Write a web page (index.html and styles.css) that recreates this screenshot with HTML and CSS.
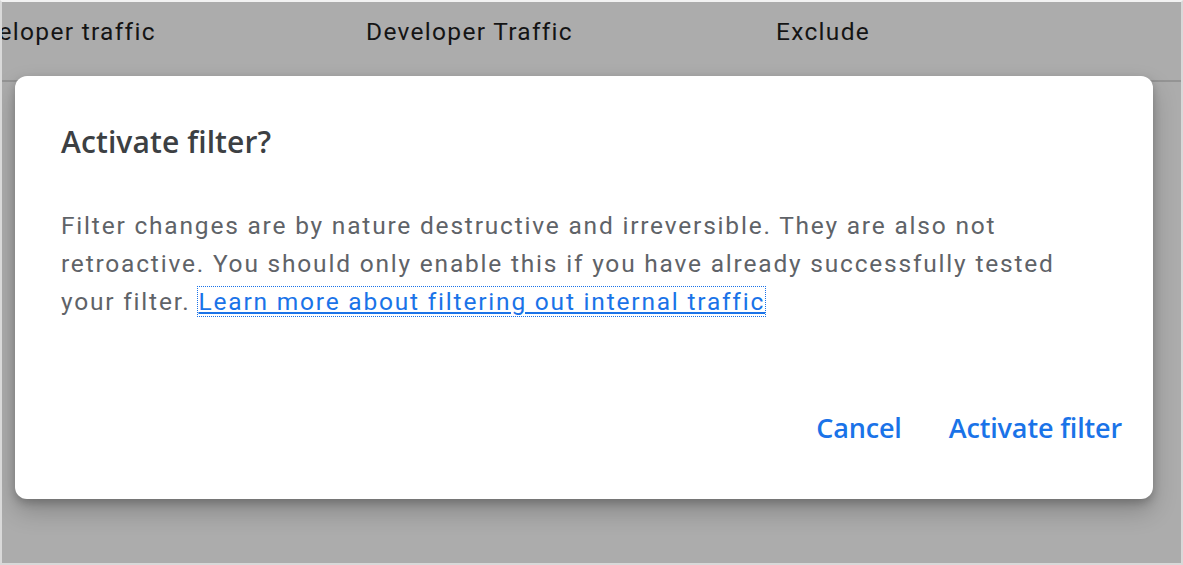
FILE: index.html
```html
<!DOCTYPE html>
<html>
<head>
<meta charset="utf-8">
<link rel="stylesheet" href="styles.css">
</head>
<body>
<div class="frame">
  <div class="page">
    <div class="row">
      <div class="cell c1">Developer traffic</div>
      <div class="cell c2">Developer Traffic</div>
      <div class="cell c3">Exclude</div>
    </div>
    <div class="scrim"></div>
    <div class="dialog" role="dialog">
      <h2 class="title">Activate filter?</h2>
      <p class="body">Filter changes are by nature destructive and irreversible. They are also not retroactive. You should only enable this if you have already successfully tested your filter. <a class="link" href="#">Learn more about filtering out internal traffic</a></p>
      <div class="actions">
        <button class="btn">Cancel</button>
        <button class="btn">Activate filter</button>
      </div>
    </div>
  </div>
</div>
</body>
</html>
```

FILE: styles.css
```css
html, body {
  margin: 0;
  padding: 0;
  background: #ffffff;
}
body {
  font-family: Roboto, "Liberation Sans", sans-serif;
}
.frame {
  width: 1183px;
  height: 565px;
  box-sizing: border-box;
  border: 2px solid #d9d9d9;
  border-top: 2px solid #f2f2f2;
  overflow: hidden;
}
.page {
  position: relative;
  height: 100%;
  background: #ffffff;
  overflow: hidden;
}
.row {
  display: flex;
  align-items: flex-start;
  box-sizing: border-box;
  height: 80px;
  padding-top: 13px;
  border-bottom: 2px solid #dcdcdc;
  color: #1f1f1f;
  font-size: 24.5px;
  letter-spacing: 1.3px;
  line-height: 34px;
  margin-left: -48px;
}
.cell { white-space: nowrap; }
.c1 { width: 412px; flex: none; }
.c2 { width: 410px; flex: none; }
.scrim {
  position: absolute;
  inset: 0;
  background: rgba(0, 0, 0, 0.325);
}
.dialog {
  position: absolute;
  left: 13px;
  top: 74px;
  width: 1138px;
  height: 423px;
  box-sizing: border-box;
  background: #ffffff;
  border-radius: 12px;
  box-shadow: 0 12px 24px rgba(0,0,0,0.22), 0 4px 8px rgba(0,0,0,0.2);
  padding: 48px 31px 0 46px;
  display: flex;
  flex-direction: column;
}
.title {
  margin: 0;
  font-family: "Open Sans", Roboto, sans-serif;
  font-weight: 600;
  font-size: 30px;
  line-height: 36px;
  color: #3c4043;
  letter-spacing: 0.1px;
}
.body {
  margin: 47px 15px 0 0;
  font-size: 24.5px;
  line-height: 38px;
  color: #5f6368;
  letter-spacing: 1.8px;
}
.link {
  color: #1a73e8;
  text-decoration: underline;
  outline: 1px dotted #1a73e8;
  outline-offset: 0;
}
.actions {
  margin-top: auto;
  margin-bottom: 53px;
  display: flex;
  justify-content: flex-end;
  gap: 47px;
}
.btn {
  border: none;
  background: none;
  padding: 0;
  font-family: "Open Sans", Roboto, sans-serif;
  font-weight: 600;
  font-size: 27px;
  line-height: 36px;
  letter-spacing: -0.15px;
  color: #1a73e8;
  cursor: pointer;
}
```
